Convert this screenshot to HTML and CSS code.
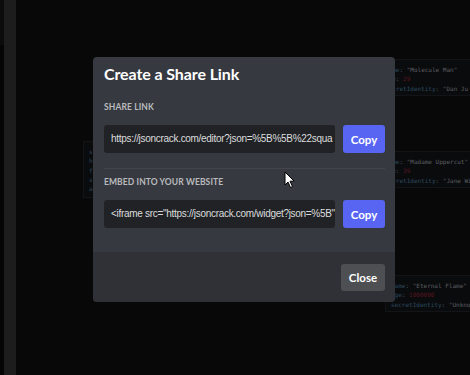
FILE: index.html
```html
<!DOCTYPE html>
<html>
<head>
<meta charset="utf-8">
<link rel="stylesheet" href="styles.css">
</head>
<body>
<div class="app">
  <aside class="rail"><div class="rail-edge"></div><div class="rail-bar"></div></aside>
  <main class="canvas">
    <div class="node node-left">
      <div class="line"><span class="k">s</span></div>
      <div class="line"><span class="k">h</span></div>
      <div class="line"><span class="k">f</span></div>
      <div class="line"><span class="k">s</span></div>
      <div class="line"><span class="k">a</span></div>
    </div>
    <div class="node node-r1">
      <div class="line"><span class="k">name</span>: <span class="s">"Molecule Man"</span></div>
      <div class="line"><span class="k">age</span>: <span class="n">29</span></div>
      <div class="line"><span class="k">secretIdentity</span>: <span class="s">"Dan Ju</span></div>
    </div>
    <div class="node node-r2">
      <div class="line"><span class="k">name</span>: <span class="s">"Madame Uppercut"</span></div>
      <div class="line"><span class="k">age</span>: <span class="n">39</span></div>
      <div class="line"><span class="k">secretIdentity</span>: <span class="s">"Jane Wi</span></div>
    </div>
    <div class="node node-r3">
      <div class="line"><span class="k">name</span>: <span class="s">"Eternal Flame"</span></div>
      <div class="line"><span class="k">age</span>: <span class="n">1000000</span></div>
      <div class="line"><span class="k">secretIdentity</span>: <span class="s">"Unkno</span></div>
    </div>
  </main>
  <div class="modal">
    <div class="modal-body">
      <h2 class="title">Create a Share Link</h2>
      <div class="label label-first">SHARE LINK</div>
      <div class="row">
        <div class="field">https://jsoncrack.com/editor?json=%5B%5B%22squa</div>
        <button class="copy">Copy</button>
      </div>
      <div class="sep"></div>
      <div class="label">EMBED INTO YOUR WEBSITE</div>
      <div class="row">
        <div class="field">&lt;iframe src="https://jsoncrack.com/widget?json=%5B"</div>
        <button class="copy">Copy</button>
      </div>
    </div>
    <div class="modal-footer">
      <button class="close">Close</button>
    </div>
  </div>
  <svg class="cursor" width="12" height="18" viewBox="0 0 12 18"><path d="M1 1 L1 14 L4 11 L6.5 16.5 L8.5 15.6 L6 10.2 L10.2 10.2 Z" fill="#fff" stroke="#000" stroke-width="1"/></svg>
</div>
</body>
</html>
```

FILE: styles.css
```css
* { box-sizing: border-box; }
html, body { margin: 0; padding: 0; }
body { width: 470px; height: 375px; overflow: hidden; background: #080808; font-family: "Liberation Sans", Arial, sans-serif; }
.app { position: relative; display: flex; width: 470px; height: 375px; overflow: hidden; }
.rail { display: flex; width: 16px; flex: none; }
.rail-edge { width: 4px; background: #050505; border-top: 45px solid #0b0b0b; }
.rail-bar { width: 12px; background: #1d1d1d; }
.canvas { position: relative; flex: 1; background: #080808; overflow: hidden; }
.node { position: absolute; background: #0a0b0d; border: 1px solid #121418; font-family: "DejaVu Sans Mono", monospace; font-size: 6px; color: #4a4d52; padding: 5px 0 0 0; overflow: hidden; }
.node .line { height: 9.3px; line-height: 9.3px; white-space: nowrap; }
.node .k { color: #2a4a60; }
.node .s { color: #5c5f63; }
.node .n { color: #5a1620; }
.node-left { left: 67px; top: 141px; width: 40px; height: 57px; padding-left: 5px; }
.node-r1 { left: 350px; top: 59px; width: 110px; height: 37px; padding-left: 18px; }
.node-r2 { left: 350px; top: 151px; width: 110px; height: 37px; padding-left: 18px; }
.node-r3 { left: 369px; top: 275px; width: 100px; height: 37px; padding-left: 5px; }

.modal { position: absolute; left: 93px; top: 57px; width: 302px; height: 245px; background: #36393f; border-radius: 4px; overflow: hidden; display: flex; flex-direction: column; }
.modal-body { flex: 1; padding: 0 10px 0 11px; }
.title { margin: 0; padding-top: 7px; font-family: Lato, "Open Sans", sans-serif; font-weight: 700; font-size: 16px; line-height: 20px; color: #ffffff; letter-spacing: -0.1px; }
.label { font-family: Lato, "Open Sans", sans-serif; font-weight: 700; font-size: 8.5px; color: #b9bbbe; line-height: 10px; letter-spacing: 0.1px; }
.label-first { margin-top: 18px; }
.row { display: flex; gap: 8px; margin-top: 13px; height: 28px; }
.field { flex: 1; background: #202225; border-radius: 3px; color: #dcddde; font-size: 10px; letter-spacing: -0.3px; line-height: 28px; padding: 0 0 0 7px; white-space: nowrap; overflow: hidden; }
.copy { width: 42px; flex: none; border: 0; border-radius: 3px; background: #5865f2; color: #fff; font-family: Lato, "Open Sans", sans-serif; font-weight: 700; font-size: 11.5px; padding: 0; }
.sep { height: 1px; background: #42454b; margin: 15px 0 0 0; }
.sep + .label { margin-top: 8px; }
.modal-footer { height: 50px; flex: none; background: #2f3136; display: flex; justify-content: flex-end; align-items: flex-start; padding: 12px 10px 0 0; }
.close { width: 44px; height: 27px; border: 0; border-radius: 3px; background: #4e4f52; color: #fff; font-family: Lato, "Open Sans", sans-serif; font-weight: 700; font-size: 11.5px; padding: 0; }
.cursor { position: absolute; left: 284px; top: 171px; }
```
